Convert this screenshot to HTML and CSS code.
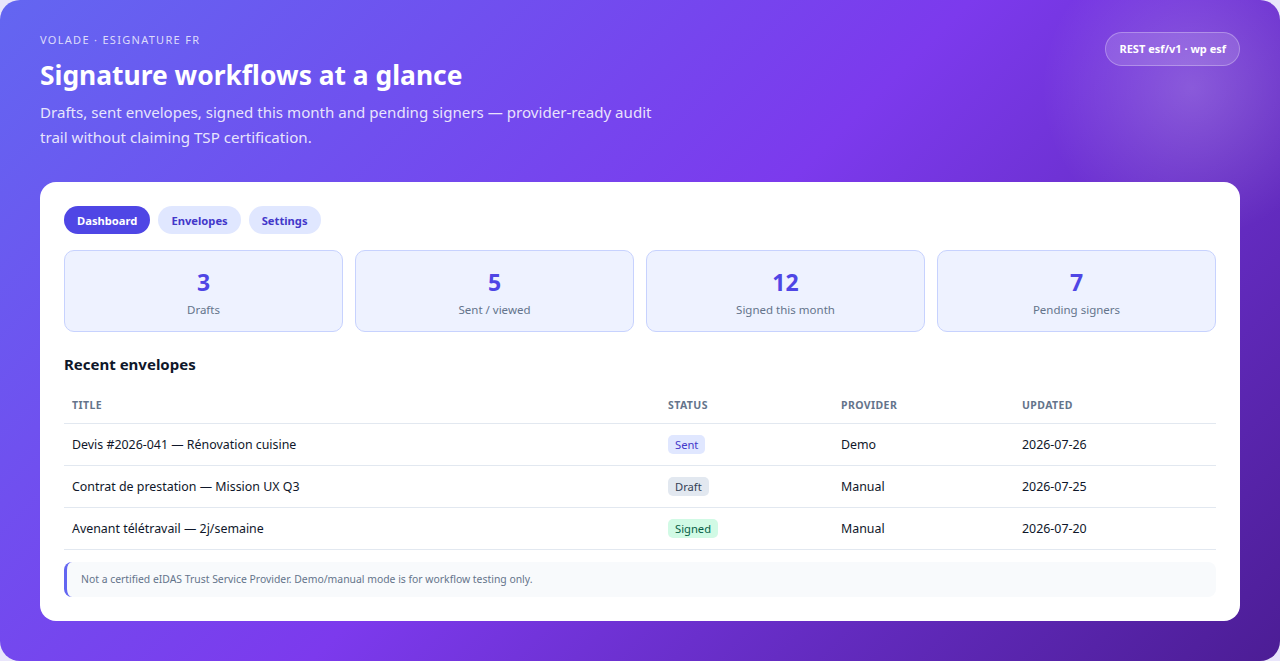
FILE: index.html
```html
<!DOCTYPE html>
<html lang="en">

<head>
    <meta charset="UTF-8">
    <meta name="viewport" content="width=device-width, initial-scale=1.0">
    <title>Volade eSignature FR</title>
    <link rel="stylesheet" href="styles.css">
</head>

<body>
    <div class="shell">
        <header class="hero">
            <div class="hero-text">
                <div class="eyebrow">Volade · eSignature FR</div>
                <h1>Signature workflows at a glance</h1>
                <p class="lead">Drafts, sent envelopes, signed this month and pending signers — provider-ready audit trail without claiming TSP certification.</p>
            </div>
            <div class="api-pill">REST esf/v1 · wp esf</div>
        </header>

        <main class="card">
            <nav class="tabs">
                <button class="tab active">Dashboard</button>
                <button class="tab">Envelopes</button>
                <button class="tab">Settings</button>
            </nav>

            <div class="stats">
                <div class="stat">
                    <div class="stat-value">3</div>
                    <div class="stat-label">Drafts</div>
                </div>
                <div class="stat">
                    <div class="stat-value">5</div>
                    <div class="stat-label">Sent / viewed</div>
                </div>
                <div class="stat">
                    <div class="stat-value">12</div>
                    <div class="stat-label">Signed this month</div>
                </div>
                <div class="stat">
                    <div class="stat-value">7</div>
                    <div class="stat-label">Pending signers</div>
                </div>
            </div>

            <h2 class="section-title">Recent envelopes</h2>

            <table class="envelopes">
                <colgroup>
                    <col class="col-title">
                    <col class="col-status">
                    <col class="col-provider">
                    <col class="col-updated">
                </colgroup>
                <thead>
                    <tr>
                        <th>Title</th>
                        <th>Status</th>
                        <th>Provider</th>
                        <th>Updated</th>
                    </tr>
                </thead>
                <tbody>
                    <tr>
                        <td>Devis #2026-041 — Rénovation cuisine</td>
                        <td><span class="badge sent">Sent</span></td>
                        <td>Demo</td>
                        <td>2026-07-26</td>
                    </tr>
                    <tr>
                        <td>Contrat de prestation — Mission UX Q3</td>
                        <td><span class="badge draft">Draft</span></td>
                        <td>Manual</td>
                        <td>2026-07-25</td>
                    </tr>
                    <tr>
                        <td>Avenant télétravail — 2j/semaine</td>
                        <td><span class="badge signed">Signed</span></td>
                        <td>Manual</td>
                        <td>2026-07-20</td>
                    </tr>
                </tbody>
            </table>

            <div class="note">Not a certified eIDAS Trust Service Provider. Demo/manual mode is for workflow testing only.</div>
        </main>
    </div>
</body>

</html>
```

FILE: styles.css
```css
/* Reset */
* {
    margin: 0;
    padding: 0;
    box-sizing: border-box;
}

body {
    font-family: 'Noto Sans', 'Open Sans', sans-serif;
    background: #e9e5fb;
    color: #0f172a;
}

.shell {
    min-height: 100vh;
    padding: 32px 40px 40px;
    border-radius: 20px;
    background:
        radial-gradient(circle at 1192px 88px, rgba(255, 255, 255, 0.2) 0, rgba(255, 255, 255, 0.09) 80px, rgba(255, 255, 255, 0) 150px),
        linear-gradient(135deg, #6366f1 0%, #7c3aed 50%, #4c1d95 100%);
}

/* Header */
.hero {
    display: flex;
    justify-content: space-between;
    align-items: flex-start;
    color: #fff;
}

.eyebrow {
    font-size: 11px;
    line-height: 16px;
    letter-spacing: 1.3px;
    text-transform: uppercase;
    color: rgba(255, 255, 255, 0.78);
}

.hero h1 {
    margin-top: 10px;
    font-size: 26.4px;
    line-height: 34px;
    font-weight: 700;
}

.lead {
    margin-top: 8px;
    max-width: 625px;
    font-size: 15.1px;
    line-height: 25px;
    color: rgba(255, 255, 255, 0.86);
}

.api-pill {
    height: 34px;
    padding: 0 13px;
    line-height: 32px;
    border-radius: 17px;
    border: 1px solid rgba(255, 255, 255, 0.28);
    background: rgba(255, 255, 255, 0.14);
    font-size: 11px;
    font-weight: 700;
    white-space: nowrap;
}

/* Card */
.card {
    margin-top: 32px;
    background: #fff;
    border-radius: 16px;
    padding: 24px;
}

.tabs {
    display: flex;
    gap: 8px;
}

.tab {
    height: 28px;
    padding: 0 13px;
    border: none;
    border-radius: 14px;
    background: #e0e7ff;
    color: #4338ca;
    font-family: inherit;
    font-size: 11.2px;
    font-weight: 700;
    cursor: pointer;
}

.tab.active {
    background: #4f46e5;
    color: #fff;
}

.stats {
    margin-top: 16px;
    display: grid;
    grid-template-columns: repeat(4, 1fr);
    gap: 12px;
}

.stat {
    height: 82px;
    padding-top: 16px;
    text-align: center;
    background: #eef2ff;
    border: 1px solid #c7d2fe;
    border-radius: 10px;
}

.stat-value {
    font-size: 23px;
    line-height: 30px;
    font-weight: 700;
    color: #4f46e5;
}

.stat-label {
    margin-top: 5px;
    font-size: 11.5px;
    line-height: 16px;
    color: #64748b;
}

.section-title {
    margin-top: 22px;
    font-size: 15px;
    line-height: 20px;
    font-weight: 700;
    color: #0f172a;
}

/* Table */
.envelopes {
    margin-top: 12px;
    width: 100%;
    border-collapse: collapse;
    table-layout: fixed;
}

.col-title { width: 596px; }
.col-status { width: 173px; }
.col-provider { width: 181px; }

.envelopes th {
    padding: 13px 8px 12px;
    text-align: left;
    font-size: 10.5px;
    line-height: 12px;
    font-weight: 700;
    letter-spacing: 0.4px;
    text-transform: uppercase;
    color: #64748b;
    border-bottom: 1px solid #e2e8f0;
}

.envelopes td {
    height: 42px;
    padding: 0 8px;
    font-size: 12.4px;
    color: #0f172a;
    border-bottom: 1px solid #e2e8f0;
    vertical-align: middle;
    white-space: nowrap;
}

.badge {
    display: inline-block;
    padding: 0 7px;
    height: 19px;
    line-height: 19px;
    border-radius: 5px;
    font-size: 11.2px;
    vertical-align: middle;
}

.badge.sent {
    background: #e0e7ff;
    color: #4338ca;
}

.badge.draft {
    background: #e2e8f0;
    color: #334155;
}

.badge.signed {
    background: #d1fae5;
    color: #065f46;
}

.note {
    margin-top: 12px;
    padding: 10px 14px;
    font-size: 10.4px;
    line-height: 15px;
    color: #64748b;
    background: #f8fafc;
    border-left: 3px solid #6366f1;
    border-radius: 8px;
}
```
